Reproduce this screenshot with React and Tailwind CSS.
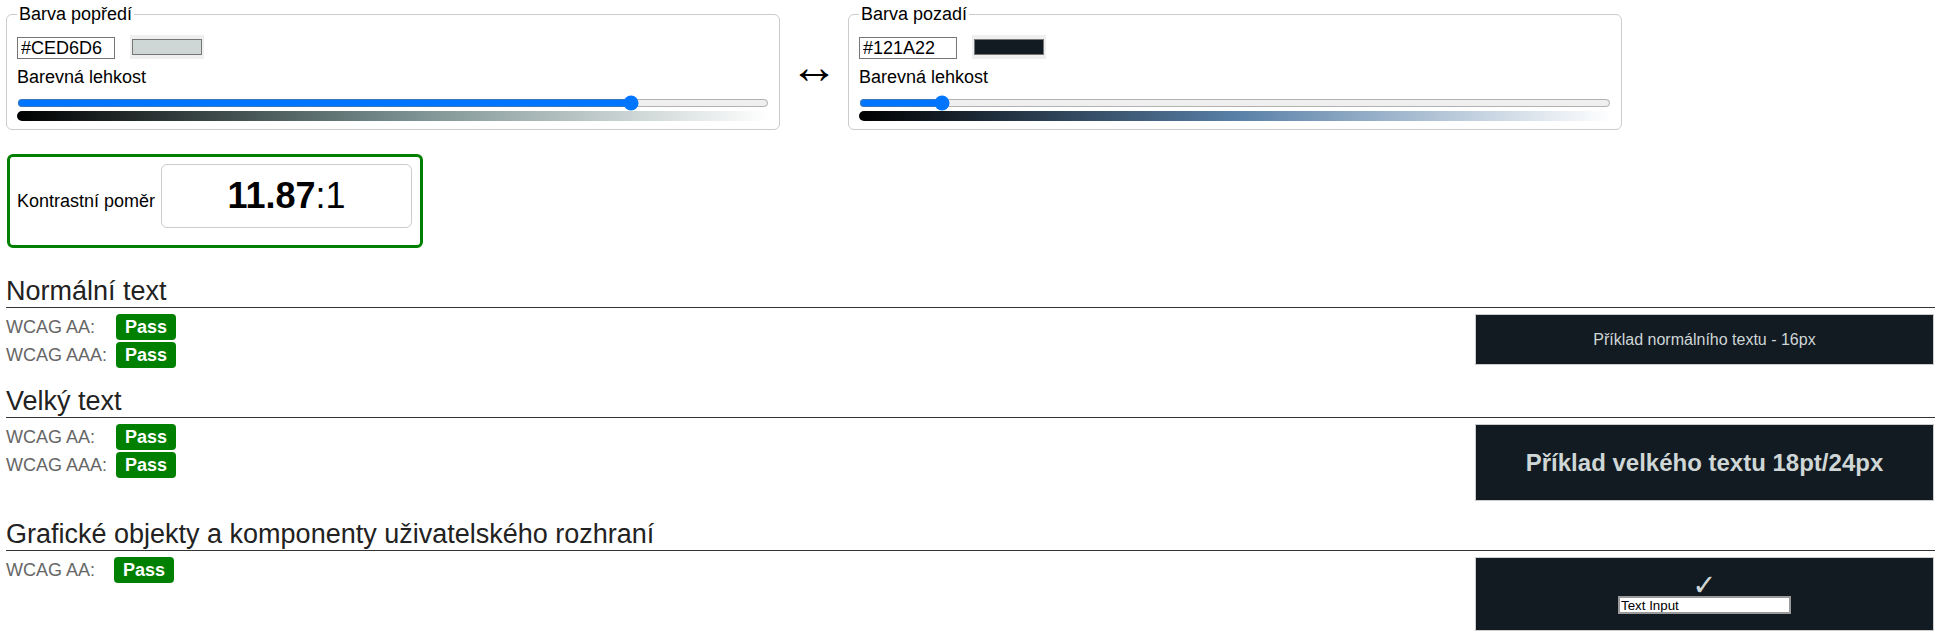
import React from "react";

const fields = [
  {
    legend: "Barva popředí",
    hex: "#CED6D6",
    lightness: 82.4,
    swatch: "bg-[#CED6D6]",
    gradient:
      "bg-[linear-gradient(to_right,hsl(180_9%_0%),hsl(180_9%_50%),hsl(180_9%_100%))]",
  },
  {
    legend: "Barva pozadí",
    hex: "#121A22",
    lightness: 10.2,
    swatch: "bg-[#121A22]",
    gradient:
      "bg-[linear-gradient(to_right,hsl(210_31%_0%),hsl(210_31%_50%),hsl(210_31%_100%))]",
  },
];

function ColorField({ legend, hex, lightness, swatch, gradient }) {
  return (
    <fieldset className="w-[774px] rounded-[6px] border border-[#cccccc] px-[10px] pt-[10px] pb-[8px]">
      <legend className="px-[2px] text-[18px]">{legend}</legend>
      <div className="flex items-end">
        <input
          type="text"
          defaultValue={hex}
          className="w-[98px] h-[22px] border border-[#767676] px-[3px] text-[18px] leading-[20px] text-black"
        />
        <div className="ml-[15px] w-[74px] h-[24px] bg-[#efefef] flex items-center justify-center">
          <div className={`w-[70px] h-[16px] border border-[#767676] ${swatch}`} />
        </div>
      </div>
      <div className="mt-[8px] text-[18px]">Barevná lehkost</div>
      <input
        type="range"
        min="0"
        max="100"
        step="0.1"
        defaultValue={lightness}
        className="mt-[7px] block w-full h-[16px]"
      />
      <div className={`h-[10px] rounded-[5px] ${gradient}`} />
    </fieldset>
  );
}

function Badge() {
  return (
    <span className="w-[60px] h-[26px] rounded-[4px] bg-[#008000] text-white font-bold text-[18px] flex items-center justify-center">
      Pass
    </span>
  );
}

function Section({ title, rows, labelWidth, children }) {
  return (
    <section>
      <h2 className="border-b border-[#333333] text-[27px] font-normal text-[#222222]">
        {title}
      </h2>
      <div className="mt-[6px] flex items-start justify-between">
        <div className="flex flex-col gap-[2px]">
          {rows.map((r) => (
            <div key={r} className="flex h-[26px] items-center">
              <span className={`${labelWidth} text-[18px] text-[#666666]`}>{r}</span>
              <Badge />
            </div>
          ))}
        </div>
        <div className="mr-[1px] w-[459px] border border-[#cccccc] bg-[#121A22] text-[#CED6D6]">
          {children}
        </div>
      </div>
    </section>
  );
}

export default function App() {
  return (
    <div className="min-h-screen bg-white pl-[6px] pr-[13px] pt-[4px] font-['Liberation_Sans',Arial,sans-serif] leading-[normal] text-black">
      {/* colour pickers */}
      <div className="flex items-center">
        <ColorField {...fields[0]} />
        <div className="w-[68px] flex justify-center">
          <span className="text-[48px] leading-none">↔</span>
        </div>
        <ColorField {...fields[1]} />
      </div>

      {/* ratio */}
      <div className="mt-[24px] ml-[1px] w-[416px] h-[94px] rounded-[6px] border-[3px] border-[#008000] flex items-center pl-[7px]">
        <span className="text-[18px]">Kontrastní poměr</span>
        <div className="ml-[6px] mb-[10px] w-[251px] h-[64px] rounded-[6px] border border-[#cccccc] flex items-center justify-center text-[36px]">
          <b>11.87</b>:1
        </div>
      </div>

      <div className="mt-[28px]">
        <Section title="Normální text" rows={["WCAG AA:", "WCAG AAA:"]} labelWidth="w-[110px]">
          <div className="h-[49px] flex items-center justify-center text-[16px]">
            Příklad normálního textu - 16px
          </div>
        </Section>
      </div>

      <div className="mt-[18px]">
        <Section title="Velký text" rows={["WCAG AA:", "WCAG AAA:"]} labelWidth="w-[110px]">
          <div className="h-[75px] flex items-center justify-center text-[24px] font-bold">
            Příklad velkého textu 18pt/24px
          </div>
        </Section>
      </div>

      <div className="mt-[18px]">
        <Section
          title="Grafické objekty a komponenty uživatelského rozhraní"
          rows={["WCAG AA:"]}
          labelWidth="w-[108px]"
        >
          <div className="h-[72px] flex flex-col items-center justify-center">
            <span className="font-['DejaVu_Sans',sans-serif] text-[29px] leading-[22px]">✓</span>
            <input
              type="text"
              defaultValue="Text Input"
              className="w-[173px] h-[18px] border-2 border-[#9a9a9a] bg-white px-[1px] text-[13.33px] leading-[14px] text-black"
            />
          </div>
        </Section>
      </div>
    </div>
  );
}
